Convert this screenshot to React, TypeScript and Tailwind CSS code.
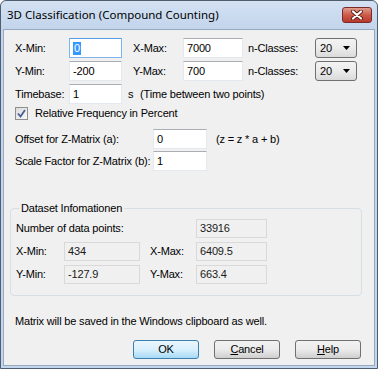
const FONT = { fontFamily: '"Liberation Sans", Arial, sans-serif' };

function TextBox({ value, w, focused }: { value: string; w: string; focused?: boolean }) {
  return (
    <div
      className={`${w} h-[20px] flex items-center bg-white border pl-[3px] ${
        focused
          ? "border-[#7eb4ea] border-t-[#569de5]"
          : "border-[#e3e9ef] border-t-[#abadb3]"
      }`}
    >
      {focused ? (
        <span className="bg-[#3399ff] text-white leading-[13px] px-[1px]">{value}</span>
      ) : (
        <span>{value}</span>
      )}
    </div>
  );
}

function ReadBox({ value, w }: { value: string; w: string }) {
  return (
    <div className={`${w} h-[19px] flex items-center border border-[#d9d9d9] bg-[#f0f0f0] pl-[3px] text-[#1a1a1a]`}>
      {value}
    </div>
  );
}

function Combo({ value }: { value: string }) {
  return (
    <div className="w-[42px] h-[20px] flex items-center justify-between rounded-[3px] border border-[#707070] bg-gradient-to-b from-[#f3f3f3] via-[#ebebeb] to-[#dadada] pl-[4px] pr-[6px]">
      <span>{value}</span>
      <svg width="7" height="4" viewBox="0 0 7 4">
        <path d="M0 0h7L3.5 4z" fill="#000" />
      </svg>
    </div>
  );
}

function Button({ label, under, def }: { label: string; under?: string; def?: boolean }) {
  return (
    <div
      className={`w-[66px] h-[19px] flex items-center justify-center rounded-[3px] border ${
        def
          ? "border-[#3c7fb1] bg-gradient-to-b from-[#eaf6fd] via-[#d9f0fc] to-[#a7d9f5]"
          : "border-[#707070] bg-gradient-to-b from-[#f2f2f2] via-[#ebebeb] to-[#cfcfcf]"
      }`}
    >
      {under ? (
        <span>
          <span className="underline">{under}</span>
          {label}
        </span>
      ) : (
        label
      )}
    </div>
  );
}

export default function App() {
  return (
    <div className="w-[378px] h-[369px] flex flex-col rounded-t-[6px] border border-[#4f5d6e] bg-[#c4d6ed] text-[11px] tracking-[-0.17px] whitespace-nowrap text-black" style={FONT}>
      {/* title bar */}
      <div className="h-[28px] flex items-start justify-between pl-[6px] pr-[5px] bg-gradient-to-b from-[#d3e1f2] to-[#c3d5ec] rounded-t-[6px]">
        <span className="mt-[6px] text-[11.5px] tracking-normal leading-[16px]" style={{ fontFamily: '"Noto Sans", sans-serif' }}>
          3D Classification (Compound Counting)
        </span>
        <div className="mt-[6px] w-[30px] h-[16px] flex items-center justify-center rounded-[3px] border border-[#7a2a2a] bg-gradient-to-b from-[#e09c8e] via-[#cc5a48] to-[#b8382a]">
          <svg width="12" height="10" viewBox="0 0 12 10">
            <path d="M2 1.5l8 7M10 1.5l-8 7" stroke="#5a1a14" strokeWidth="4" strokeLinecap="round" />
            <path d="M2 1.5l8 7M10 1.5l-8 7" stroke="#fff" strokeWidth="2.2" strokeLinecap="round" />
          </svg>
        </div>
      </div>

      {/* client */}
      <div className="flex-1 mx-[2px] mb-[2px] border border-[#97a9c0] bg-[#f0f0f0] flex flex-col pt-[8px] pl-[11px]">
        <div className="flex items-center h-[20px]">
          <span className="w-[54px]">X-Min:</span>
          <TextBox value="0" w="w-[53px]" focused />
          <span className="ml-[11px] w-[50px]">X-Max:</span>
          <TextBox value="7000" w="w-[60px]" />
          <span className="ml-[5px] w-[67px]">n-Classes:</span>
          <Combo value="20" />
        </div>
        <div className="flex items-center h-[20px] mt-[3px]">
          <span className="w-[54px]">Y-Min:</span>
          <TextBox value="-200" w="w-[53px]" />
          <span className="ml-[11px] w-[50px]">Y-Max:</span>
          <TextBox value="700" w="w-[60px]" />
          <span className="ml-[5px] w-[67px]">n-Classes:</span>
          <Combo value="20" />
        </div>
        <div className="flex items-center h-[20px] mt-[3px]">
          <span className="w-[54px]">Timebase:</span>
          <TextBox value="1" w="w-[53px]" />
          <span className="ml-[6px] w-[12px]">s</span>
          <span>(Time between two points)</span>
        </div>
        <div className="flex items-center h-[13px] mt-[3px]">
          <div className="w-[13px] h-[13px] border border-[#8e8f8f] bg-gradient-to-br from-[#dcdcdc] to-[#f8f8f8] flex items-center justify-center">
            <svg width="9" height="9" viewBox="0 0 9 9">
              <path d="M1 4.5l2.5 3L8 1" stroke="#4a5f97" strokeWidth="1.8" fill="none" />
            </svg>
          </div>
          <span className="ml-[7px]">Relative Frequency in Percent</span>
        </div>
        <div className="flex items-center h-[20px] mt-[9px]">
          <span className="w-[138px]">Offset for Z-Matrix (a):</span>
          <TextBox value="0" w="w-[54px]" />
          <span className="ml-[9px]">(z = z * a + b)</span>
        </div>
        <div className="flex items-center h-[20px] mt-[2px]">
          <span className="w-[138px]">Scale Factor for Z-Matrix (b):</span>
          <TextBox value="1" w="w-[54px]" />
        </div>

        <fieldset className="mt-[30px] -ml-[5px] w-[352px] h-[95px] border border-[#d5dfe5] rounded-[4px] pl-[5px] pb-[10px]">
          <legend className="ml-[3px] px-[2px] leading-[14px]">Dataset Infomationen</legend>
          <div className="flex items-center h-[19px] mt-[4px]">
            <span className="w-[180px]">Number of data points:</span>
            <ReadBox value="33916" w="w-[71px]" />
          </div>
          <div className="flex items-center h-[19px] mt-[4px]">
            <span className="w-[48px]">X-Min:</span>
            <ReadBox value="434" w="w-[76px]" />
            <span className="ml-[10px] w-[46px]">X-Max:</span>
            <ReadBox value="6409.5" w="w-[71px]" />
          </div>
          <div className="flex items-center h-[19px] mt-[4px]">
            <span className="w-[48px]">Y-Min:</span>
            <ReadBox value="-127.9" w="w-[76px]" />
            <span className="ml-[10px] w-[46px]">Y-Max:</span>
            <ReadBox value="663.4" w="w-[71px]" />
          </div>
        </fieldset>

        <div className="mt-[18px] leading-[14px]">Matrix will be saved in the Windows clipboard as well.</div>

        <div className="flex gap-[15px] mt-[12px] ml-[118px]">
          <Button label="OK" def />
          <Button label="ancel" under="C" />
          <Button label="elp" under="H" />
        </div>
      </div>
    </div>
  );
}
